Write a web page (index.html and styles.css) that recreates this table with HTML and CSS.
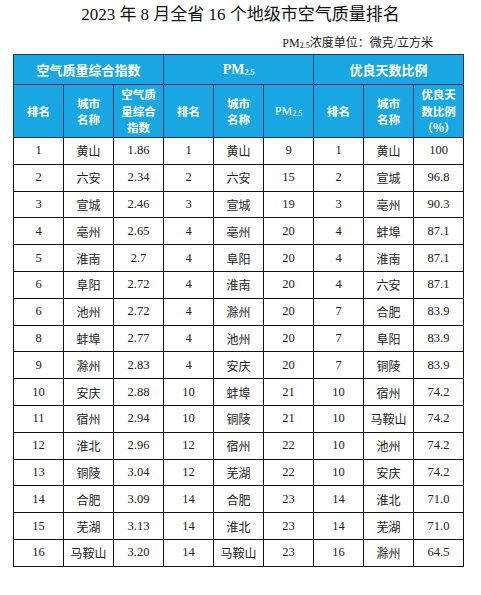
FILE: index.html
```html
<!DOCTYPE html>
<html lang="zh">
<head>
<meta charset="utf-8">
<link rel="stylesheet" href="styles.css">
</head>
<body>
<div class="page">
  <h1 class="title">2023 年 8 月全省 16 个地级市空气质量排名</h1>
  <div class="unit">PM<sub>2.5</sub>浓度单位：微克/立方米</div>
  <table class="rank">
    <colgroup>
      <col><col><col><col><col><col><col><col><col>
    </colgroup>
    <thead>
      <tr class="h1">
        <th colspan="3">空气质量综合指数</th>
        <th colspan="3" class="pm">PM<sub>2.5</sub></th>
        <th colspan="3">优良天数比例</th>
      </tr>
      <tr class="h2">
        <th>排名</th><th>城市<br>名称</th><th>空气质<br>量综合<br>指数</th>
        <th>排名</th><th>城市<br>名称</th><th class="pm">PM<sub>2.5</sub></th>
        <th>排名</th><th>城市<br>名称</th><th>优良天<br>数比例<br>（%）</th>
      </tr>
    </thead>
    <tbody>
      <tr><td>1</td><td class="c">黄山</td><td>1.86</td><td>1</td><td class="c">黄山</td><td>9</td><td>1</td><td class="c">黄山</td><td>100</td></tr>
      <tr><td>2</td><td class="c">六安</td><td>2.34</td><td>2</td><td class="c">六安</td><td>15</td><td>2</td><td class="c">宣城</td><td>96.8</td></tr>
      <tr><td>3</td><td class="c">宣城</td><td>2.46</td><td>3</td><td class="c">宣城</td><td>19</td><td>3</td><td class="c">亳州</td><td>90.3</td></tr>
      <tr><td>4</td><td class="c">亳州</td><td>2.65</td><td>4</td><td class="c">亳州</td><td>20</td><td>4</td><td class="c">蚌埠</td><td>87.1</td></tr>
      <tr><td>5</td><td class="c">淮南</td><td>2.7</td><td>4</td><td class="c">阜阳</td><td>20</td><td>4</td><td class="c">淮南</td><td>87.1</td></tr>
      <tr><td>6</td><td class="c">阜阳</td><td>2.72</td><td>4</td><td class="c">淮南</td><td>20</td><td>4</td><td class="c">六安</td><td>87.1</td></tr>
      <tr><td>6</td><td class="c">池州</td><td>2.72</td><td>4</td><td class="c">滁州</td><td>20</td><td>7</td><td class="c">合肥</td><td>83.9</td></tr>
      <tr><td>8</td><td class="c">蚌埠</td><td>2.77</td><td>4</td><td class="c">池州</td><td>20</td><td>7</td><td class="c">阜阳</td><td>83.9</td></tr>
      <tr><td>9</td><td class="c">滁州</td><td>2.83</td><td>4</td><td class="c">安庆</td><td>20</td><td>7</td><td class="c">铜陵</td><td>83.9</td></tr>
      <tr><td>10</td><td class="c">安庆</td><td>2.88</td><td>10</td><td class="c">蚌埠</td><td>21</td><td>10</td><td class="c">宿州</td><td>74.2</td></tr>
      <tr><td>11</td><td class="c">宿州</td><td>2.94</td><td>10</td><td class="c">铜陵</td><td>21</td><td>10</td><td class="c">马鞍山</td><td>74.2</td></tr>
      <tr><td>12</td><td class="c">淮北</td><td>2.96</td><td>12</td><td class="c">宿州</td><td>22</td><td>10</td><td class="c">池州</td><td>74.2</td></tr>
      <tr><td>13</td><td class="c">铜陵</td><td>3.04</td><td>12</td><td class="c">芜湖</td><td>22</td><td>10</td><td class="c">安庆</td><td>74.2</td></tr>
      <tr><td>14</td><td class="c">合肥</td><td>3.09</td><td>14</td><td class="c">合肥</td><td>23</td><td>14</td><td class="c">淮北</td><td>71.0</td></tr>
      <tr><td>15</td><td class="c">芜湖</td><td>3.13</td><td>14</td><td class="c">淮北</td><td>23</td><td>14</td><td class="c">芜湖</td><td>71.0</td></tr>
      <tr><td>16</td><td class="c">马鞍山</td><td>3.20</td><td>14</td><td class="c">马鞍山</td><td>23</td><td>16</td><td class="c">滁州</td><td>64.5</td></tr>
    </tbody>
  </table>
</div>
</body>
</html>
```
FILE: styles.css
```css
html, body {
  margin: 0;
  padding: 0;
  background: #ffffff;
}
.page {
  width: 481px;
  padding-top: 5px;
  font-family: "Liberation Serif", "Noto Sans CJK SC", serif;
  color: #1a1a1a;
}
.title {
  margin: 0;
  font-size: 17px;
  line-height: 20px;
  font-weight: normal;
  text-align: center;
  color: #111;
}
.unit {
  margin-top: 11px;
  padding-right: 48px;
  text-align: right;
  font-size: 12px;
  line-height: 14px;
  height: 14px;
  color: #222;
}
.unit sub, .pm sub {
  font-size: 8px;
  vertical-align: -1px;
  line-height: 0;
}
.rank {
  margin: 4px 0 0 13px;
  border-collapse: collapse;
  table-layout: fixed;
  width: 450px;
}
.rank col {
  width: 50px;
}
.rank th {
  background: #19a7e3;
  color: #ffffff;
  font-family: "Noto Sans CJK SC", sans-serif;
  font-weight: bold;
  border: 1px solid #1f3566;
  padding: 0;
  text-align: center;
}
.rank th.pm {
  font-family: "Liberation Serif", serif;
}
.rank .h1 th {
  height: 29px;
  font-size: 13px;
}
.rank .h1 th.pm {
  font-size: 14px;
}
.rank .h2 th {
  height: 52px;
  font-size: 11.5px;
  line-height: 16.5px;
}
.rank .h2 th.pm {
  font-size: 12px;
  font-weight: normal;
}
.rank td {
  border: 1px solid #111111;
  height: 25.8px;
  padding: 0;
  text-align: center;
  font-size: 12.5px;
  color: #222;
}
.rank td.c {
  font-family: "Noto Sans CJK SC", sans-serif;
  font-size: 12px;
}
```
